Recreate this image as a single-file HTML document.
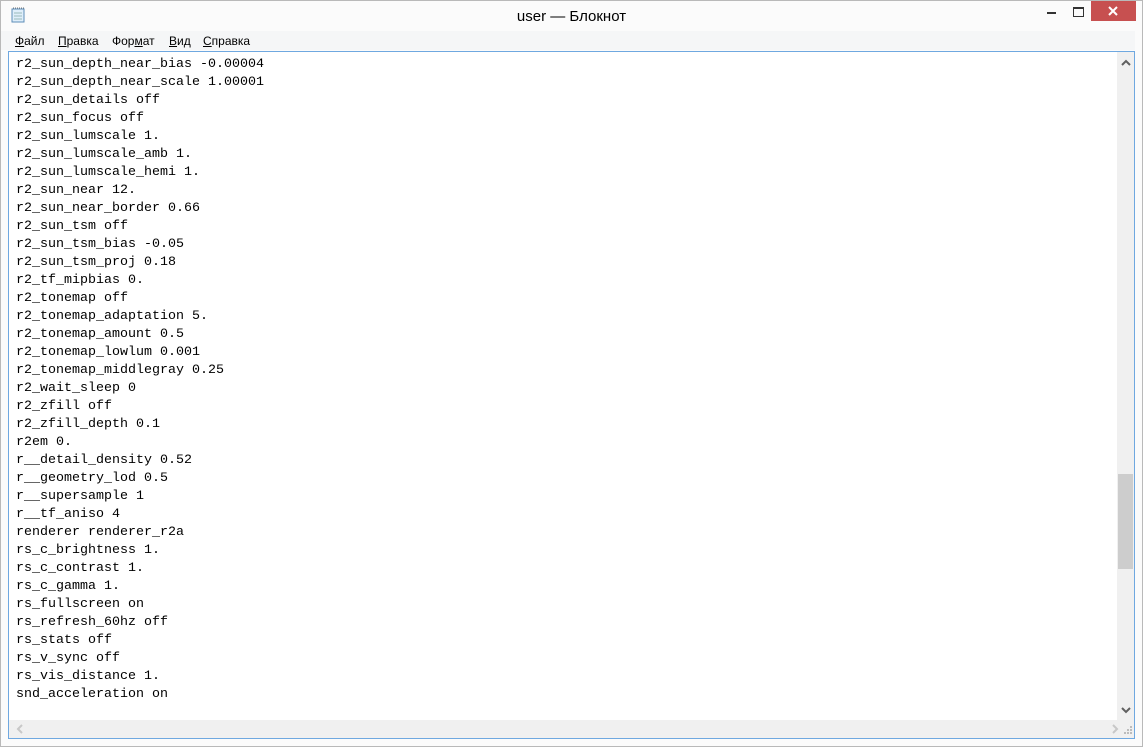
<!DOCTYPE html><html><head><style>
body{margin:0;width:1143px;height:747px;background:#fbfbfb;position:relative;overflow:hidden;font-family:"Liberation Sans",sans-serif}
.win{position:absolute;left:0;top:0;width:1141px;height:745px;border:1px solid #b9b9b9;}
.title{position:absolute;left:0;top:0;width:1143px;text-align:center;top:8px;font-size:15px;color:#000}
.menu{position:absolute;left:1px;top:31px;width:1134px;height:19px;background:#f5f6f7;font-size:12px;}
.menu span{position:absolute;top:3px}
.edit{position:absolute;left:8px;top:51px;width:1125px;height:686px;border:1px solid #6fa8e0;background:#fff}
pre{margin:0;position:absolute;left:7px;top:4px;font-family:"Liberation Mono",monospace;font-size:13.33px;line-height:18px;color:#000}
.vs{position:absolute;left:1108px;top:0;width:17px;height:668px;background:#f0f0f0}
.th{position:absolute;left:1109px;top:422px;width:15px;height:95px;background:#cdcdcd}
.hs{position:absolute;left:0;top:668px;width:1125px;height:18px;background:#f0f0f0}
</style></head><body>
<div class="win"></div>
<svg style="position:absolute;left:10px;top:6px" width="17" height="18"><rect x="2" y="3" width="12" height="13" fill="#dfeefa" stroke="#5e8db8"/><path d="M3 2h11" stroke="#777" stroke-dasharray="1 1"/><path d="M4 7h8M4 10h8M4 13h8" stroke="#9bb"/></svg>
<div class="title">user — Блокнот</div>
<div style="position:absolute;left:1047px;top:12px;width:9px;height:2px;background:#333"></div>
<div style="position:absolute;left:1073px;top:7px;width:9px;height:7px;border:1px solid #333;border-top-width:2px"></div>
<div style="position:absolute;left:1091px;top:1px;width:45px;height:20px;background:#c75050;"><svg width="45" height="20"><path d="M18 6l8 8M26 6l-8 8" stroke="#fff" stroke-width="2"/></svg></div>
<div class="menu"><span style="left:14px"><u>Ф</u>айл</span><span style="left:57px"><u>П</u>равка</span><span style="left:111px">Фор<u>м</u>ат</span><span style="left:168px"><u>В</u>ид</span><span style="left:202px"><u>С</u>правка</span></div>
<div class="edit"><pre>r2_sun_depth_near_bias -0.00004
r2_sun_depth_near_scale 1.00001
r2_sun_details off
r2_sun_focus off
r2_sun_lumscale 1.
r2_sun_lumscale_amb 1.
r2_sun_lumscale_hemi 1.
r2_sun_near 12.
r2_sun_near_border 0.66
r2_sun_tsm off
r2_sun_tsm_bias -0.05
r2_sun_tsm_proj 0.18
r2_tf_mipbias 0.
r2_tonemap off
r2_tonemap_adaptation 5.
r2_tonemap_amount 0.5
r2_tonemap_lowlum 0.001
r2_tonemap_middlegray 0.25
r2_wait_sleep 0
r2_zfill off
r2_zfill_depth 0.1
r2em 0.
r__detail_density 0.52
r__geometry_lod 0.5
r__supersample 1
r__tf_aniso 4
renderer renderer_r2a
rs_c_brightness 1.
rs_c_contrast 1.
rs_c_gamma 1.
rs_fullscreen on
rs_refresh_60hz off
rs_stats off
rs_v_sync off
rs_vis_distance 1.
snd_acceleration on</pre>
<div class="vs"><svg style="position:absolute;left:0;top:0" width="17" height="20"><path d="M5 13l4-4 4 4" stroke="#606060" stroke-width="2" fill="none"/></svg><svg style="position:absolute;left:0;top:648px" width="17" height="20"><path d="M5 8l4 4 4-4" stroke="#606060" stroke-width="2" fill="none"/></svg></div>
<div class="th"></div>
<div class="hs"><svg style="position:absolute;left:4px;top:0" width="14" height="18"><path d="M9 5l-4 4 4 4" stroke="#c8c8c8" stroke-width="2" fill="none"/></svg><svg style="position:absolute;left:1099px;top:0" width="14" height="18"><path d="M5 5l4 4-4 4" stroke="#c8c8c8" stroke-width="2" fill="none"/></svg><svg style="position:absolute;left:1113px;top:4px" width="12" height="12"><path d="M8 2h2v2h-2zM5 5h2v2h-2zM8 5h2v2h-2zM2 8h2v2h-2zM5 8h2v2h-2zM8 8h2v2h-2z" fill="#bcbcbc"/></svg></div>
</div>
</body></html>
